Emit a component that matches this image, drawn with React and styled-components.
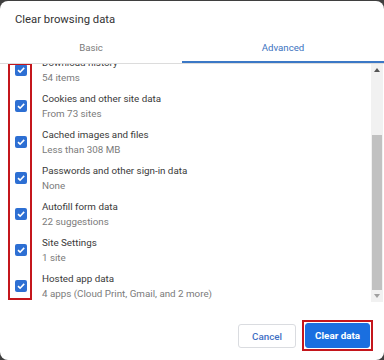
import React from 'react';
import styled, { createGlobalStyle } from 'styled-components';

const GlobalStyle = createGlobalStyle`
  html, body {
    margin: 0;
    padding: 0;
    background: #3f3f3f;
  }
  body {
    font-family: Roboto, "Liberation Sans", Arial, sans-serif;
    -webkit-font-smoothing: antialiased;
  }
`;

const Dialog = styled.div`
  width: 384px;
  height: 359px;
  margin-top: 1px;
  background: #fff;
  border-radius: 8px;
  display: flex;
  flex-direction: column;
  overflow: hidden;
`;

const Title = styled.div`
  padding: 11px 15px 0;
  height: 16px;
  line-height: 16px;
  font-size: 11.3px;
  color: #333;
  flex: none;
`;

const Tabs = styled.div`
  display: flex;
  border-bottom: 1px solid #dcdcdc;
  flex: none;
`;

const Tab = styled.div`
  width: ${(p) => (p.$width ? `${p.$width}px` : 'auto')};
  flex: ${(p) => (p.$width ? 'none' : '1')};
  height: 32px;
  padding-top: 3px;
  display: flex;
  align-items: center;
  justify-content: center;
  font-size: 9.7px;
  color: ${(p) => (p.$active ? '#3b72c0' : '#7a7a7a')};
  box-shadow: ${(p) => (p.$active ? 'inset 0 -2px 0 #3b78c6' : 'none')};
`;

const Body = styled.div`
  display: flex;
  height: 238px;
  flex: none;
`;

const ListArea = styled.div`
  flex: 1;
  overflow: hidden;
  position: relative;
`;

const List = styled.div`
  margin-top: -12px;
  display: flex;
  flex-direction: column;
`;

const Row = styled.div`
  height: 36px;
  display: flex;
  align-items: center;
  padding-left: 15px;
  gap: 15px;
`;

const Box = styled.div`
  width: 12px;
  height: 12px;
  border-radius: 2px;
  background: #2d6fd3;
  display: flex;
  align-items: center;
  justify-content: center;
  flex: none;
`;

const Texts = styled.div`
  display: flex;
  flex-direction: column;
`;

const ItemTitle = styled.div`
  font-size: 9.8px;
  line-height: 15px;
  color: #3a3a3a;
`;

const ItemSub = styled.div`
  font-size: 9.8px;
  line-height: 15px;
  color: #7b7b7b;
`;

const Marker = styled.div`
  position: absolute;
  left: 8px;
  top: -1px;
  width: 20px;
  height: 233px;
  border: 2px solid #c4161c;
`;

const Scrollbar = styled.div`
  width: 12px;
  margin-right: 1px;
  background: #f1f1f1;
  display: flex;
  flex-direction: column;
  align-items: center;
`;

const Arrow = styled.div`
  height: 12px;
  flex: none;
  display: flex;
  align-items: center;
  justify-content: center;
`;

const Thumb = styled.div`
  width: 10px;
  height: 157px;
  margin-top: 59px;
  background: #c1c1c1;
`;

const Spacer = styled.div`
  flex: 1;
`;

const Footer = styled.div`
  flex: 1;
  display: flex;
  justify-content: flex-end;
  align-items: flex-start;
  padding: 18px 11px 0 0;
  gap: 6px;
`;

const Button = styled.button`
  height: ${(p) => (p.$primary ? '25px' : '24px')};
  margin-top: ${(p) => (p.$primary ? '0' : '4px')};
  padding: 0 ${(p) => (p.$primary ? '9px' : '13px')};
  border-radius: 3px;
  border: 1px solid ${(p) => (p.$primary ? '#1a6fe0' : '#dadce0')};
  background: ${(p) => (p.$primary ? '#1a6fe0' : '#fff')};
  color: ${(p) => (p.$primary ? '#fff' : '#3f6fc4')};
  font-family: Roboto, "Liberation Sans", Arial, sans-serif;
  font-size: 9.8px;
  font-weight: ${(p) => (p.$primary ? 700 : 500)};
  cursor: pointer;
`;

const Highlight = styled.div`
  border: 2px solid #c4161c;
  padding: 1px;
  display: flex;
`;

const items = [
  ['Download history', '54 items'],
  ['Cookies and other site data', 'From 73 sites'],
  ['Cached images and files', 'Less than 308 MB'],
  ['Passwords and other sign-in data', 'None'],
  ['Autofill form data', '22 suggestions'],
  ['Site Settings', '1 site'],
  ['Hosted app data', '4 apps (Cloud Print, Gmail, and 2 more)'],
];

function Check() {
  return (
    <Box>
      <svg width="10" height="10" viewBox="0 0 10 10">
        <path d="M2 5.2 L4.1 7.2 L8.2 2.9" fill="none" stroke="#fff" strokeWidth="1.6" />
      </svg>
    </Box>
  );
}

export default function App() {
  return (
    <>
      <GlobalStyle />
      <Dialog>
        <Title>Clear browsing data</Title>
        <Tabs>
          <Tab $width={182}>Basic</Tab>
          <Tab $active>Advanced</Tab>
        </Tabs>
        <Body>
          <ListArea>
            <List>
              {items.map(([title, sub]) => (
                <Row key={title}>
                  <Check />
                  <Texts>
                    <ItemTitle>{title}</ItemTitle>
                    <ItemSub>{sub}</ItemSub>
                  </Texts>
                </Row>
              ))}
            </List>
            <Marker />
          </ListArea>
          <Scrollbar>
            <Arrow>
              <svg width="6" height="4" viewBox="0 0 6 4">
                <path d="M0 4 L3 0 L6 4 Z" fill="#555" />
              </svg>
            </Arrow>
            <Thumb />
            <Spacer />
            <Arrow>
              <svg width="6" height="4" viewBox="0 0 6 4">
                <path d="M0 0 L3 4 L6 0 Z" fill="#a0a0a0" />
              </svg>
            </Arrow>
          </Scrollbar>
        </Body>
        <Footer>
          <Button>Cancel</Button>
          <Highlight>
            <Button $primary>Clear data</Button>
          </Highlight>
        </Footer>
      </Dialog>
    </>
  );
}
